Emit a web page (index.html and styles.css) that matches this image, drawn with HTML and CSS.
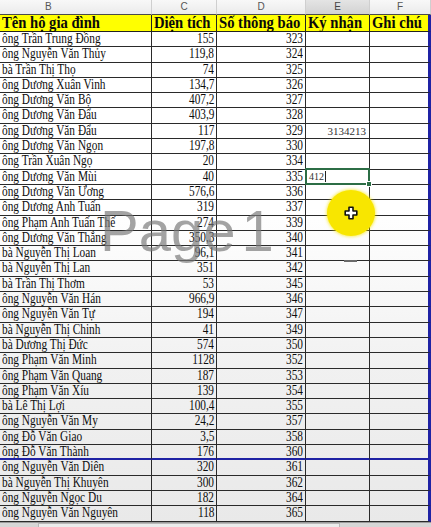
FILE: index.html
```html
<!DOCTYPE html>
<html lang="vi">
<head>
<meta charset="utf-8">
<title>Sổ ký nhận</title>
<link rel="stylesheet" href="styles.css">
</head>
<body>
<div class="sheet">
  <div class="h hb">B</div><div class="h">C</div><div class="h">D</div><div class="h sel">E</div><div class="h">F</div>

  <div class="y"><span class="s">Tên hộ gia đình</span></div>
  <div class="y"><span class="s">Diện tích</span></div>
  <div class="y"><span class="s">Số thông báo</span></div>
  <div class="y"><span class="s">Ký nhận</span></div>
  <div class="y f"><span class="s">Ghi chú</span></div>

  <div class="c"><span class="s">ông Trần Trung Đồng</span></div><div class="c r"><span class="s">155</span></div><div class="c r"><span class="s">323</span></div><div class="c"></div><div class="c f"></div>
  <div class="c"><span class="s">ông Nguyễn Văn Thủy</span></div><div class="c r"><span class="s">119,8</span></div><div class="c r"><span class="s">324</span></div><div class="c"></div><div class="c f"></div>
  <div class="c"><span class="s">bà Trần Thị Thọ</span></div><div class="c r"><span class="s">74</span></div><div class="c r"><span class="s">325</span></div><div class="c"></div><div class="c f"></div>
  <div class="c"><span class="s">ông Dương Xuân Vinh</span></div><div class="c r"><span class="s">134,7</span></div><div class="c r"><span class="s">326</span></div><div class="c"></div><div class="c f"></div>
  <div class="c"><span class="s">ông Dương Văn Bộ</span></div><div class="c r"><span class="s">407,2</span></div><div class="c r"><span class="s">327</span></div><div class="c"></div><div class="c f"></div>
  <div class="c"><span class="s">ông Dương Văn Đẩu</span></div><div class="c r"><span class="s">403,9</span></div><div class="c r"><span class="s">328</span></div><div class="c"></div><div class="c f"></div>
  <div class="c"><span class="s">ông Dương Văn Đẩu</span></div><div class="c r"><span class="s">117</span></div><div class="c r"><span class="s">329</span></div><div class="c r"><span class="sm">3134213</span></div><div class="c f"></div>
  <div class="c"><span class="s">ông Dương Văn Ngọn</span></div><div class="c r"><span class="s">197,8</span></div><div class="c r"><span class="s">330</span></div><div class="c"></div><div class="c f"></div>
  <div class="c"><span class="s">ông Trần Xuân Ngọ</span></div><div class="c r"><span class="s">20</span></div><div class="c r"><span class="s">334</span></div><div class="c"></div><div class="c f"></div>
  <div class="c"><span class="s">ông Dương Văn Mùi</span></div><div class="c r"><span class="s">40</span></div><div class="c r"><span class="s">335</span></div><div class="c edit"><span class="typed">412</span><span class="caret"></span><span class="selbox"></span></div><div class="c f"></div>
  <div class="c"><span class="s">ông Dương Văn Ương</span></div><div class="c r"><span class="s">576,6</span></div><div class="c r"><span class="s">336</span></div><div class="c"></div><div class="c f"></div>
  <div class="c"><span class="s">ông Dương Anh Tuấn</span></div><div class="c r"><span class="s">319</span></div><div class="c r"><span class="s">337</span></div><div class="c"></div><div class="c f"></div>
  <div class="c"><span class="s">ông Phạm Anh Tuấn Thế</span></div><div class="c r"><span class="s">274</span></div><div class="c r"><span class="s">339</span></div><div class="c"></div><div class="c f"></div>
  <div class="c"><span class="s">ông Dương Văn Thắng</span></div><div class="c r"><span class="s">350,3</span></div><div class="c r"><span class="s">340</span></div><div class="c"></div><div class="c f"></div>
  <div class="c"><span class="s">bà Nguyễn Thị Loan</span></div><div class="c r"><span class="s">96,1</span></div><div class="c r"><span class="s">341</span></div><div class="c"></div><div class="c f"></div>
  <div class="c"><span class="s">bà Nguyễn Thị Lan</span></div><div class="c r"><span class="s">351</span></div><div class="c r"><span class="s">342</span></div><div class="c"></div><div class="c f"></div>
  <div class="c"><span class="s">bà Trần Thị Thơm</span></div><div class="c r"><span class="s">53</span></div><div class="c r"><span class="s">345</span></div><div class="c"></div><div class="c f"></div>
  <div class="c"><span class="s">ông Nguyễn Văn Hán</span></div><div class="c r"><span class="s">966,9</span></div><div class="c r"><span class="s">346</span></div><div class="c"></div><div class="c f"></div>
  <div class="c"><span class="s">ông Nguyễn Văn Tự</span></div><div class="c r"><span class="s">194</span></div><div class="c r"><span class="s">347</span></div><div class="c"></div><div class="c f"></div>
  <div class="c"><span class="s">bà Nguyễn Thị Chinh</span></div><div class="c r"><span class="s">41</span></div><div class="c r"><span class="s">349</span></div><div class="c"></div><div class="c f"></div>
  <div class="c"><span class="s">bà Dương Thị Đức</span></div><div class="c r"><span class="s">574</span></div><div class="c r"><span class="s">350</span></div><div class="c"></div><div class="c f"></div>
  <div class="c"><span class="s">ông Phạm Văn Minh</span></div><div class="c r"><span class="s">1128</span></div><div class="c r"><span class="s">352</span></div><div class="c"></div><div class="c f"></div>
  <div class="c"><span class="s">ông Phạm Văn Quang</span></div><div class="c r"><span class="s">187</span></div><div class="c r"><span class="s">353</span></div><div class="c"></div><div class="c f"></div>
  <div class="c"><span class="s">ông Phạm Văn Xíu</span></div><div class="c r"><span class="s">139</span></div><div class="c r"><span class="s">354</span></div><div class="c"></div><div class="c f"></div>
  <div class="c"><span class="s">bà Lê Thị Lợi</span></div><div class="c r"><span class="s">100,4</span></div><div class="c r"><span class="s">355</span></div><div class="c"></div><div class="c f"></div>
  <div class="c"><span class="s">ông Nguyễn Văn My</span></div><div class="c r"><span class="s">24,2</span></div><div class="c r"><span class="s">357</span></div><div class="c"></div><div class="c f"></div>
  <div class="c"><span class="s">ông Đỗ Văn Giao</span></div><div class="c r"><span class="s">3,5</span></div><div class="c r"><span class="s">358</span></div><div class="c"></div><div class="c f"></div>
  <div class="c pb"><span class="s">ông Đỗ Văn Thành</span></div><div class="c r pb"><span class="s">176</span></div><div class="c r pb"><span class="s">360</span></div><div class="c pb"></div><div class="c f pb"></div>
  <div class="c"><span class="s">ông Nguyễn Văn Diên</span></div><div class="c r"><span class="s">320</span></div><div class="c r"><span class="s">361</span></div><div class="c"></div><div class="c f"></div>
  <div class="c"><span class="s">bà Nguyễn Thị Khuyên</span></div><div class="c r"><span class="s">300</span></div><div class="c r"><span class="s">362</span></div><div class="c"></div><div class="c f"></div>
  <div class="c"><span class="s">ông Nguyễn Ngọc Du</span></div><div class="c r"><span class="s">182</span></div><div class="c r"><span class="s">364</span></div><div class="c"></div><div class="c f"></div>
  <div class="c"><span class="s">ông Nguyễn Văn Nguyên</span></div><div class="c r"><span class="s">118</span></div><div class="c r"><span class="s">365</span></div><div class="c"></div><div class="c f"></div>

  <div class="watermark">Page 1</div>
  <div class="spot">
    <svg class="cursor" width="14" height="14" viewBox="0 0 14 14">
      <path d="M5 1.2 H9 V5 H12.8 V9 H9 V12.8 H5 V9 H1.2 V5 H5 Z" fill="#fff" stroke="#111" stroke-width="1.6" stroke-linejoin="round"/>
    </svg>
  </div>
  <div class="dash"></div>
</div>
<div class="bottom"><div class="scroll"></div></div>
</body>
</html>
```

FILE: styles.css
```css
html, body {
  margin: 0;
  padding: 0;
}
body {
  width: 431px;
  height: 527px;
  overflow: hidden;
  background: #dcdcdc;
  font-family: "Liberation Serif", "Times New Roman", serif;
}
.sheet {
  position: relative;
  display: grid;
  grid-template-columns: 152px 65px 89px 64px 61px;
  grid-template-rows: 15px 17px repeat(32, 15.3px);
  background: linear-gradient(#ffffff 0%, #ffffff 40%, #f1f1f1 70%, #e9e9e9 100%);
  overflow: hidden;
}
.h {
  box-sizing: border-box;
  background: linear-gradient(#f8f8f8, #ebebeb);
  border-right: 1px solid #cfcfcf;
  border-bottom: 1px solid #4a4a4a;
  font: 10px "Liberation Sans", Arial, sans-serif;
  color: #555;
  text-align: center;
  line-height: 14px;
}
.h.hb {
  text-align: left;
  padding-left: 45px;
}
.h.sel {
  background: linear-gradient(#e4e4e4, #d2d2d2);
  color: #444;
}
.y {
  box-sizing: border-box;
  background: #ffff00;
  border-right: 1px solid #222;
  border-bottom: 1px solid #222;
  font-weight: bold;
  font-size: 17px;
  line-height: 16px;
  padding-left: 2px;
  white-space: nowrap;
  color: #0a0a0a;
}
.y .s {
  transform: scaleX(0.86);
}
.c {
  box-sizing: border-box;
  border-right: 1px solid #2a2a2a;
  border-bottom: 1px solid #2a2a2a;
  font-size: 14px;
  line-height: 14.3px;
  padding-left: 2px;
  white-space: nowrap;
  overflow: hidden;
  color: #0d0d0d;
}
.c.r {
  text-align: right;
  padding-left: 0;
  padding-right: 2px;
}
.s {
  display: inline-block;
  transform: scaleX(0.81);
  transform-origin: left center;
}
.r .s {
  transform-origin: right center;
}
.sm {
  display: inline-block;
  font-size: 11px;
  color: #333;
  padding-right: 1px;
}
.f {
  border-right: 3px solid #1f22a4;
}
.pb {
  border-bottom: 2px solid #1f22a4;
}
.edit {
  position: relative;
  overflow: visible;
  font-size: 10px;
  line-height: 14px;
  color: #333;
}
.typed {
  display: inline-block;
  padding-left: 1px;
}
.caret {
  display: inline-block;
  width: 1px;
  height: 11px;
  background: #222;
  vertical-align: -2px;
  margin-left: 1px;
}
.selbox {
  position: absolute;
  left: -1px;
  top: -2px;
  right: -1px;
  bottom: -1px;
  border: 2px solid #2c6d45;
}
.selbox::after {
  content: "";
  position: absolute;
  right: -4px;
  bottom: -4px;
  width: 4px;
  height: 4px;
  background: #2c6d45;
  border: 1px solid #fff;
}
.watermark {
  position: absolute;
  left: 100px;
  top: 201px;
  font: 58px/60px "Liberation Sans", Arial, sans-serif;
  color: rgba(120, 120, 120, 0.68);
  word-spacing: -10px;
  white-space: nowrap;
  pointer-events: none;
}
.spot {
  position: absolute;
  left: 327px;
  top: 190px;
  width: 48px;
  height: 46px;
  border-radius: 50%;
  background: #f8e600;
  box-shadow: 0 0 3px 1px rgba(248, 230, 0, 0.6);
  display: flex;
  align-items: center;
  justify-content: center;
}
.cursor {
  display: block;
}
.dash {
  position: absolute;
  left: 344px;
  top: 260px;
  width: 13px;
  height: 2px;
  background: #6a6a6a;
}
.bottom {
  height: 6px;
  border-top: 1px solid #9a9a9a;
  background: #d6d6d6;
  display: flex;
}
.scroll {
  margin-left: 38px;
  width: 300px;
  background: #ececec;
  border: 1px solid #b8b8b8;
  border-bottom: none;
}
```
